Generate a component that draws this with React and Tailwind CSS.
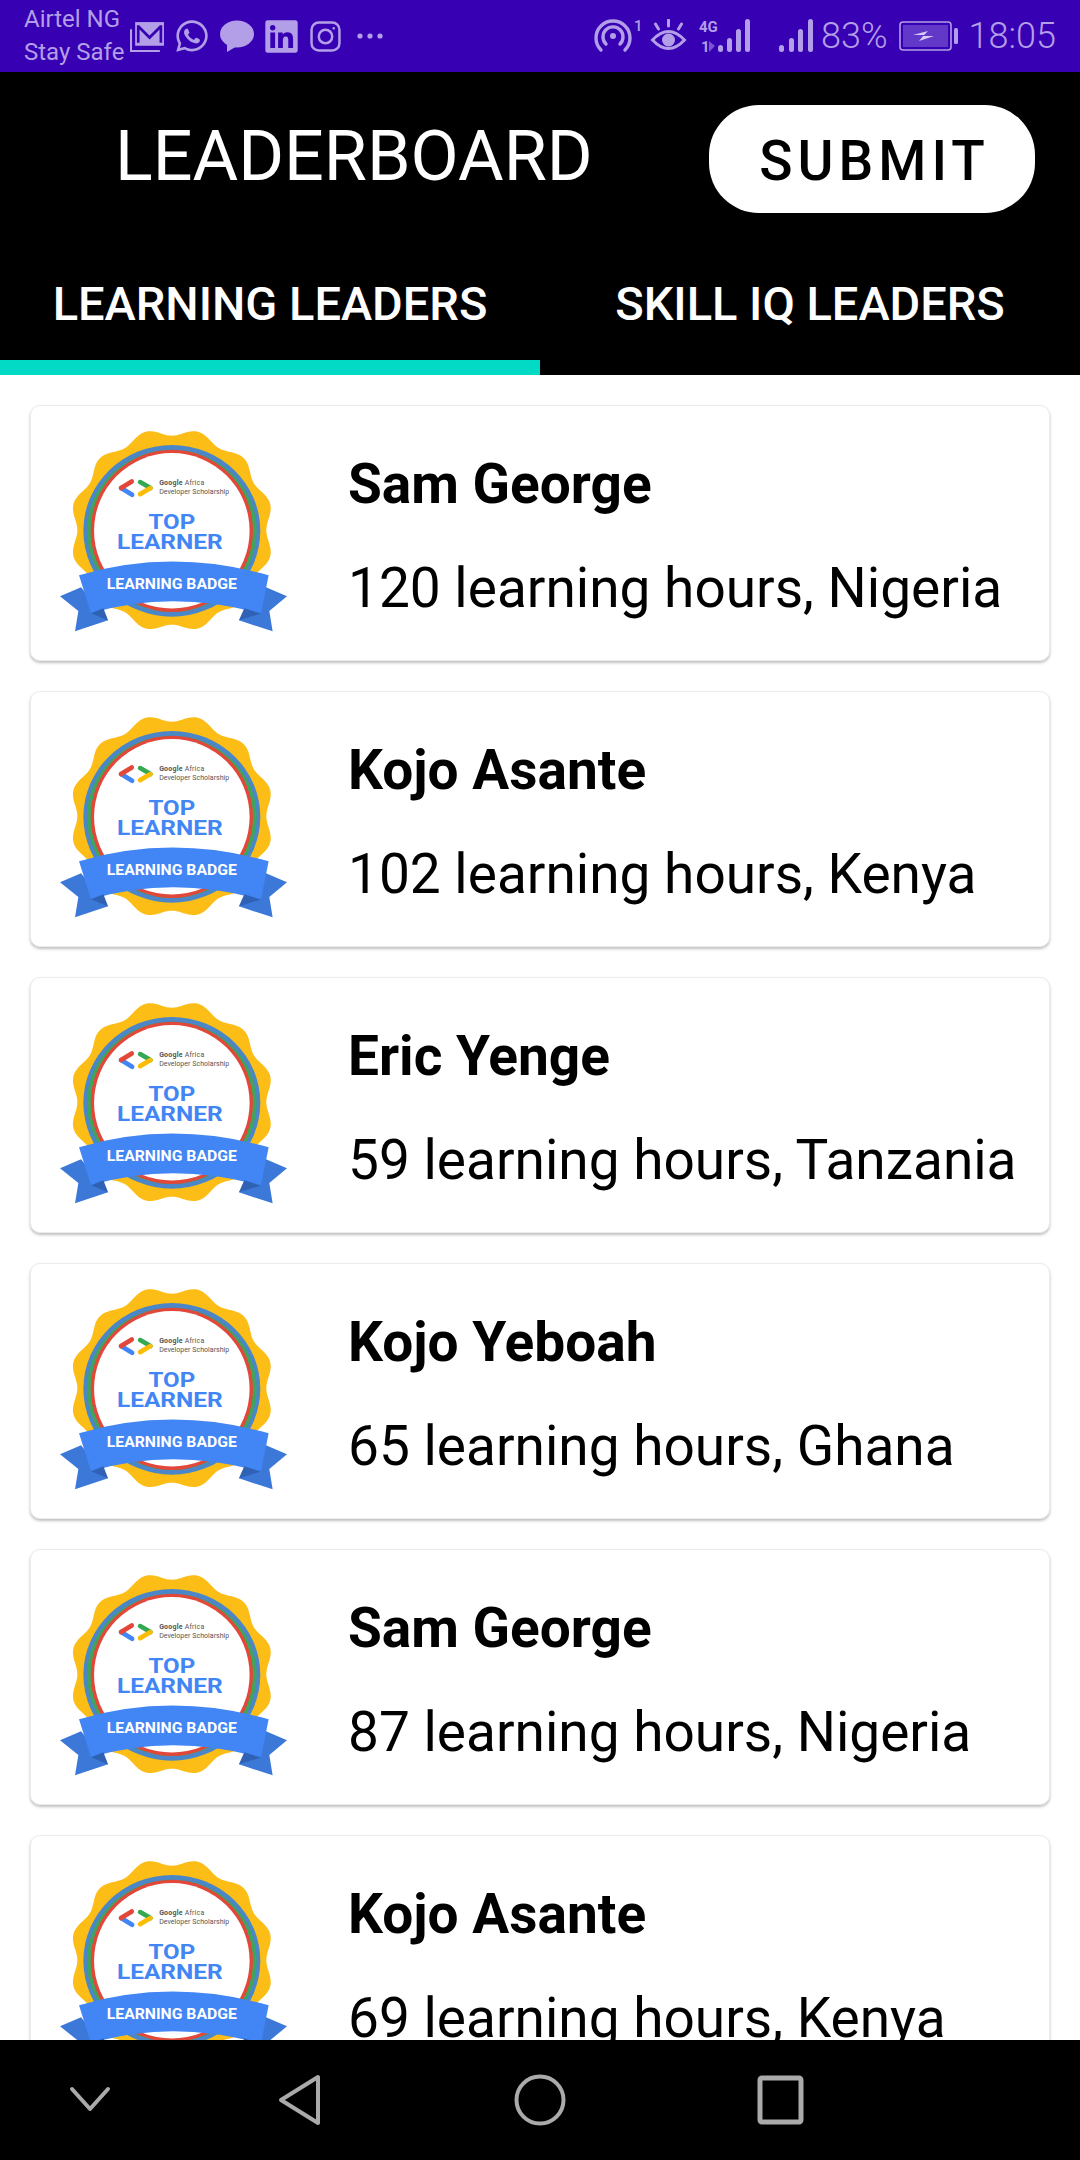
import React from 'react';
import { FaWhatsapp, FaLinkedin } from 'react-icons/fa';

const leaders = [
  { name: 'Sam George', detail: '120 learning hours, Nigeria' },
  { name: 'Kojo Asante', detail: '102 learning hours, Kenya' },
  { name: 'Eric Yenge', detail: '59 learning hours, Tanzania' },
  { name: 'Kojo Yeboah', detail: '65 learning hours, Ghana' },
  { name: 'Sam George', detail: '87 learning hours, Nigeria' },
  { name: 'Kojo Asante', detail: '69 learning hours, Kenya' },
];

/* contorno ondulado do selo */
function scallopPath(cx, cy, r, amp, lobes) {
  let d = '';
  for (let i = 0; i <= 240; i++) {
    const a = (i / 240) * Math.PI * 2;
    const rad = r - amp * Math.cos(a * lobes);
    const x = cx + rad * Math.sin(a);
    const y = cy - rad * Math.cos(a);
    d += `${i === 0 ? 'M' : 'L'}${x.toFixed(1)} ${y.toFixed(1)}`;
  }
  return d + 'Z';
}

const SCALLOP = scallopPath(455, 390, 294, 11, 12);

function Badge() {
  return (
    <svg viewBox="120 90 680 605" className="mb-[5px] h-[202px] w-[227px] shrink-0">
      <path d={SCALLOP} fill="#fdbd17" />
      <ellipse cx="455" cy="392" rx="265" ry="257" fill="#4a86c8" />
      <ellipse cx="455" cy="392" rx="254" ry="243" fill="#41a45c" />
      <ellipse cx="455" cy="392" rx="243" ry="243" fill="#e2483a" />
      <circle cx="455" cy="392" r="233" fill="#ffffff" />
      <path d="M303 264L336 284" fill="none" stroke="#4285f4" strokeWidth="14" strokeLinecap="round" />
      <path d="M335 244L303 264" fill="none" stroke="#e2483a" strokeWidth="14" strokeLinecap="round" />
      <path d="M360 246L391 264" fill="none" stroke="#34a853" strokeWidth="14" strokeLinecap="round" />
      <path d="M391 264L360 282" fill="none" stroke="#fbbc05" strokeWidth="14" strokeLinecap="round" />
      <text x="417" y="256" fontSize="21" fontWeight="700" fill="#555" textLength="135">Google <tspan fontWeight="400">Africa</tspan></text>
      <text x="417" y="282" fontSize="21" fill="#555" textLength="210">Developer Scholarship</text>
      <text x="455" y="387" fontSize="63" fontWeight="700" fill="#4285f4" textAnchor="middle" textLength="140" lengthAdjust="spacingAndGlyphs">TOP</text>
      <text x="449" y="445" fontSize="63" fontWeight="700" fill="#4285f4" textAnchor="middle" textLength="317" lengthAdjust="spacingAndGlyphs">LEARNER</text>
      <path d="M120 588L183 561L264 660L165 693L175 632Z" fill="#3b78d8" />
      <path d="M800 588L737 561L656 660L757 693L747 632Z" fill="#3b78d8" />
      <path d="M177 525Q455 443 745 525L722 640Q455 567 213 639Z" fill="#4285f4" />
      <path d="M213 639L264 660L250 624Z" fill="#2f62b5" />
      <path d="M722 640L656 660L672 624Z" fill="#2f62b5" />
      <text x="455" y="565" fontSize="43" fontWeight="700" fill="#ffffff" textAnchor="middle" textLength="390" lengthAdjust="spacingAndGlyphs">LEARNING BADGE</text>
    </svg>
  );
}

function LeaderCard({ name, detail }) {
  return (
    <div className="flex h-[256px] shrink-0 items-center rounded-[10px] border border-[#ececec] bg-white pl-[29px] shadow-[0_2px_3px_rgba(0,0,0,0.25)]">
      <Badge />
      <div className="ml-[61px] flex flex-col pt-[6px]">
        <p className="text-[55px] font-bold leading-[60px] text-black">{name}</p>
        <p className="mt-[44px] text-[55px] leading-[60px] text-black whitespace-nowrap">{detail}</p>
      </div>
    </div>
  );
}

function StatusBar() {
  return (
    <div className="flex h-[72px] shrink-0 items-center justify-between bg-[#3700b3] pl-[24px] pr-[24px] text-[#b39ee8]">
      <div className="flex items-center">
        <div className="text-[24px] leading-[33px]">
          <p>Airtel NG</p>
          <p>Stay Safe</p>
        </div>
        <svg viewBox="0 0 34 30" className="ml-[6px] h-[31px] w-[35px]">
          <path d="M5 1h28v23H5z" fill="#b39ee8" />
          <path d="M8 4v17M30 4v17M8 5l11 11L30 5" fill="none" stroke="#3700b3" strokeWidth="2.6" />
          <path d="M1 8v21h28" fill="none" stroke="#b39ee8" strokeWidth="2" />
        </svg>
        <FaWhatsapp className="ml-[9px] h-[36px] w-[36px]" />
        <svg viewBox="0 0 34 32" className="ml-[10px] h-[32px] w-[34px]">
          <ellipse cx="17" cy="14" rx="17" ry="13.5" fill="#b39ee8" />
          <path d="M7 22l0 10 12-7z" fill="#b39ee8" />
        </svg>
        <FaLinkedin className="ml-[9px] h-[37px] w-[37px]" />
        <svg viewBox="0 0 30 30" className="ml-[10px] h-[31px] w-[31px]" fill="none" stroke="#b39ee8" strokeWidth="2.4">
          <rect x="1.5" y="1.5" width="27" height="27" rx="7" />
          <circle cx="15" cy="15" r="6.5" />
          <circle cx="23" cy="7" r="1.2" fill="#b39ee8" stroke="none" />
        </svg>
        <svg viewBox="0 0 26 6" className="ml-[16px] h-[6px] w-[26px]" fill="#b39ee8">
          <circle cx="3" cy="3" r="2.6" />
          <circle cx="13" cy="3" r="2.6" />
          <circle cx="23" cy="3" r="2.6" />
        </svg>
      </div>
      <div className="flex items-center">
        <svg viewBox="0 0 46 36" className="h-[36px] w-[46px] overflow-visible" fill="none" stroke="#b39ee8" strokeWidth="3.4" strokeLinecap="round">
          <path d="M6 32a17 17 0 1 1 24 0" />
          <path d="M11 26a10 10 0 1 1 14 0" />
          <circle cx="18" cy="18" r="3" fill="#b39ee8" stroke="none" />
          <text x="39" y="13" fontSize="15" fontWeight="500" fill="#b39ee8" stroke="none">1</text>
        </svg>
        <svg viewBox="0 0 36 34" className="ml-[9px] h-[34px] w-[37px]" fill="none" stroke="#b39ee8" strokeWidth="3">
          <path d="M2 21q16-17 32 0q-16 17-32 0z" />
          <circle cx="18" cy="21" r="6.5" fill="#b39ee8" stroke="none" />
          <path d="M18 1v6M5 5l3 5M31 5l-3 5" strokeLinecap="round" />
        </svg>
        <svg viewBox="0 0 56 34" className="ml-[12px] h-[34px] w-[56px] overflow-visible" fill="#b39ee8">
          <text x="0" y="13" fontSize="15" fontWeight="700">4G</text>
          <text x="2" y="33" fontSize="15" fontWeight="700">1</text>
          <path d="M10 22l6 5-6 6z" fill="#7a55d0" />
          <rect x="19" y="26" width="5" height="7" rx="2.5" />
          <rect x="28" y="19" width="5" height="14" rx="2.5" />
          <rect x="37" y="10" width="5" height="23" rx="2.5" />
          <rect x="46" y="0" width="5" height="33" rx="2.5" />
        </svg>
        <svg viewBox="0 0 36 34" className="ml-[24px] h-[34px] w-[36px]" fill="#b39ee8">
          <rect x="0" y="26" width="5" height="7" rx="2.5" />
          <rect x="10" y="19" width="5" height="14" rx="2.5" />
          <rect x="19" y="10" width="5" height="23" rx="2.5" />
          <rect x="29" y="0" width="5" height="33" rx="2.5" />
        </svg>
        <span className="ml-[6px] text-[36px] font-light leading-none">83%</span>
        <svg viewBox="0 0 60 30" className="ml-[11px] h-[30px] w-[60px]">
          <rect x="1" y="1" width="51" height="28" rx="3" fill="none" stroke="#b39ee8" strokeWidth="1.6" />
          <rect x="4" y="4" width="45" height="22" fill="#6238c8" />
          <path d="M14 14l15-4-5 5 11 0-15 5 5-6z" fill="#d8ccf5" />
          <rect x="55" y="7" width="4" height="16" rx="1.5" fill="#b39ee8" />
        </svg>
        <span className="ml-[10px] text-[36px] font-light leading-none">18:05</span>
      </div>
    </div>
  );
}

function NavBar() {
  return (
    <div className="flex h-[120px] shrink-0 items-center bg-black">
      <svg viewBox="0 0 1080 120" className="h-[120px] w-full" fill="none" stroke="#aaaaaa" strokeWidth="4" strokeLinejoin="round" strokeLinecap="round">
        <path d="M72 49l18 20 18-20" />
        <path d="M318 37v46L281 60z" />
        <circle cx="540" cy="60" r="23.5" />
        <rect x="760" y="38" width="41" height="44" rx="2" strokeWidth="5" />
      </svg>
    </div>
  );
}

export default function App() {
  return (
    <div className="flex h-[2160px] w-[1080px] flex-col overflow-hidden bg-white font-['Roboto',sans-serif]">
      <StatusBar />

      <header className="h-[303px] shrink-0 bg-black text-white">
        <div className="flex h-[173px] items-start justify-between pl-[115px] pr-[45px] pt-[33px]">
          <h1 className="mt-[1px] text-[70px] font-normal leading-[100px]">LEADERBOARD</h1>
          <button className="h-[108px] w-[326px] rounded-[50px] bg-white pl-[5px] pt-[5px] text-[55px] font-medium tracking-[5px] text-black">
            SUBMIT
          </button>
        </div>
        <div className="flex h-[130px]">
          <div className="flex h-full w-1/2 items-start justify-center border-b-[15px] border-[#03dac5] pt-[29px] text-[47px] font-medium leading-[60px]">
            LEARNING LEADERS
          </div>
          <div className="flex h-full w-1/2 items-start justify-center pt-[29px] text-[47px] font-medium leading-[60px]">
            SKILL IQ LEADERS
          </div>
        </div>
      </header>

      <main className="flex min-h-0 flex-1 flex-col gap-[30px] overflow-hidden px-[30px] pt-[30px]">
        {leaders.map((l, i) => (
          <LeaderCard key={i} name={l.name} detail={l.detail} />
        ))}
      </main>

      <NavBar />
    </div>
  );
}
